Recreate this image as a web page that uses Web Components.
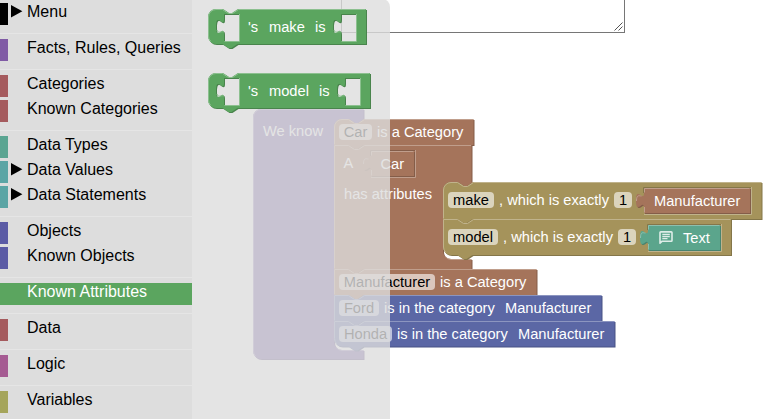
<!DOCTYPE html>
<html lang="en">
<head>
<meta charset="utf-8">
<title>Block editor</title>
<style>
html,body{margin:0;width:770px;height:419px;overflow:hidden;background:#fff;font-family:"Liberation Sans",Arial,sans-serif}
</style>
</head>
<body>
<block-editor></block-editor>
<script>
/* One row of the category list: colour swatch, optional arrow, name. */
customElements.define('toolbox-row', class extends HTMLElement {
  connectedCallback() {
    const c = this.getAttribute('color');
    const on = this.hasAttribute('selected');
    const arrow = this.hasAttribute('closed') ? '<svg width="12" height="13" viewBox="0 0 12 13"><path d="M0 0L11.4 6.3L0 12.6Z"/></svg>' : '';
    this.attachShadow({mode: 'open'}).innerHTML = `<style>
      :host{display:flex;height:22px;margin-bottom:3px;box-sizing:border-box;border-left:8px solid ${c};
        background:${on ? c : 'transparent'};color:${on ? '#fff' : '#000'};font-size:16px;line-height:18px;white-space:nowrap}
      .arrow{width:16px;margin-left:3px;padding-top:2px;line-height:0}
    </style><span class="arrow">${arrow}</span><span><slot></slot></span>`;
  }
});

customElements.define('toolbox-sep', class extends HTMLElement {
  connectedCallback() {
    this.attachShadow({mode: 'open'}).innerHTML =
      '<style>:host{display:block;margin:8px 0 5px;height:1px;background:#e5e5e5}</style>';
  }
});

/* Text on a block; the "field" attribute gives it an editable chip of that width. */
customElements.define('block-label', class extends HTMLElement {
  connectedCallback() {
    const field = this.getAttribute('field');
    this.attachShadow({mode: 'open'}).innerHTML = `<style>
      :host{position:absolute;left:${this.getAttribute('x')}px;top:${this.getAttribute('y')}px;height:16px;
        font-size:14.667px;line-height:16px;white-space:pre;color:${field ? '#000' : '#fff'};
        ${field ? `width:${field}px;text-align:center;border-radius:4px;background:rgba(255,255,255,.6);` : ''}}
    </style><slot></slot>`;
  }
});

const mix = (hex, to, k) => 'rgb(' + [1, 3, 5].map(i =>
  Math.round(parseInt(hex.substr(i, 2), 16) * (1 - k) + to * k)).join() + ')';

/* Block outline with bevel. x, y, w, h are canvas coordinates; holes = x positions of inline sockets;
   rim = colour of the parent block round a nested value. */
customElements.define('code-block', class extends HTMLElement {
  connectedCallback() {
    const n = a => parseFloat(this.getAttribute(a)) || 0;
    const x = n('x'), y = n('y'), w = n('w'), h = n('h'), color = this.getAttribute('color');
    const kind = this.getAttribute('kind');
    let d, hi, rim = '';
    if (kind === 'value') {
      const parent = this.getAttribute('rim');
      d = `M0 0H${w}V${h}H0V20c0 -10 -8 8 -8 -7.5s8 2.5 8 -7.5Z`;
      hi = `M${w - .5} .5H.5V4.5M-7.5 13c0 -7 3 -5 5 -5M.5 19V${h - .5}`;
      rim = `<path d="M-.5 5V-.5H${w + 1}" fill="none" stroke="${mix(parent, 0, .2)}"/>
        <path d="M${w + 1.5} -1V${h + 1.5}H0" fill="none" stroke="${mix(parent, 255, .3)}"/>`;
    } else {
      const top = this.hasAttribute('first') ? 8 : 0;
      const notch = this.hasAttribute('hat') ? '' : 'H15l6 4h3l6 -4';
      const start = top ? `M0 8A8 8 0 0 1 8 0${notch}H${w}` : `M0 0${notch}H${w}`;
      let right = '';
      let inner = '';
      if (this.hasAttribute('mouth')) {
        const [mx, my, mh] = this.getAttribute('mouth').split(' ').map(Number);
        right = `V${my}H${mx + 30}l-6 4h-3l-6 -4h-7a8 8 0 0 0 -8 8v${mh - 16}a8 8 0 0 0 8 8H${w}`;
        inner = `M${mx + 2.3} ${my + mh - 2.3}A8.5 8.5 0 0 0 ${mx + 8} ${my + mh + .5}H${w - .5}`;
      }
      right += `V${h}`;
      const bump = this.hasAttribute('hat') ? '' : 'H29.5l-6 4h-3l-6 -4';
      const round = this.hasAttribute('last');
      d = start + right + bump + (round ? `H8a8 8 0 0 1 -8 -8Z` : `H0Z`);
      hi = (top ? `M.5 ${round ? h - 8 : h - .5}V8A7.5 7.5 0 0 1 8 .5` : `M.5 ${round ? h - 8 : h - .5}V.5`) +
        (notch ? 'H14.5l6 4h4l6 -4' : '') + `H${w - .5}` + inner;
      if (round) hi += `M2.7 ${h - 2.7}A7.5 7.5 0 0 1 .5 ${h - 8}`;
      for (const s of (this.getAttribute('holes') || '').split(' ').filter(Boolean).map(Number)) {
        d += `M${s} 5V10c0 10 -8 -8 -8 7.5s8 -2.5 8 7.5V32H${s + 15}V5Z`;
        hi += `M${s + 15.5} 5V32.5H${s + .5}M${s - 7} 21c1 4 4 1 6.5 2`;
      }
    }
    this.attachShadow({mode: 'open'}).innerHTML = `<style>
      :host{position:absolute;left:${x}px;top:${y}px;width:${w}px;height:${h}px}
      svg{position:absolute;left:0;top:0;overflow:visible}
    </style>
    <svg width="${w}" height="${h}" fill-rule="evenodd">
      ${rim}
      <path d="${d}" transform="translate(1 1)" fill="${mix(color, 0, .2)}"/>
      <path d="${d}" fill="${color}"/>
      <path d="${hi}" fill="none" stroke="${mix(color, 255, .3)}"/>
    </svg><slot></slot>`;
  }
});

/* Speech bubble with three text lines. */
customElements.define('message-icon', class extends HTMLElement {
  connectedCallback() {
    this.attachShadow({mode: 'open'}).innerHTML = `<style>
      :host{position:absolute;left:${this.getAttribute('x')}px;top:${this.getAttribute('y')}px;width:14px;height:14px;opacity:.8}
      svg{display:block}
    </style><svg width="14" height="14" viewBox="0 0 14 14">
      <path d="M1 12.2V1.6Q1 .9 1.8 .9H12.2Q13 .9 13 1.6V9.4Q13 10.2 12.2 10.2H3.2Z" fill="none" stroke="#fff" stroke-width="1.6" stroke-linejoin="round"/>
      <path d="M3.3 3.4H10.8M3.3 5.5H10.8M3.3 7.6H8.5" stroke="#fff" stroke-width="1.3"/>
    </svg>`;
  }
});

customElements.define('block-editor', class extends HTMLElement {
  connectedCallback() {
    const BR = '#a5745b', OC = '#a5935b', BL = '#5b67a5', GR = '#5ba55f';
    this.attachShadow({mode: 'open'}).innerHTML = `<style>
      :host{display:grid;grid-template-columns:192px 1fr;position:relative;width:770px;height:419px;overflow:hidden}
      nav{background:#ddd;padding-top:3px;box-sizing:border-box;height:419px;overflow:hidden;position:relative;z-index:3}
      .code{position:absolute;left:341px;top:-60px;width:282px;height:91px;border:1px solid #767676;background:#fff}
      .code svg{position:absolute;right:1px;bottom:1px}
      .flyout{position:absolute;left:192px;top:-1px;width:198px;height:421px;background:#ddd;opacity:.8;border-top-right-radius:8px;z-index:1}
      .layer{position:absolute;inset:0;z-index:0}
      .layer.top{z-index:2}
    </style>
    <nav>
      <toolbox-row color="#000000" closed>Menu</toolbox-row><toolbox-sep></toolbox-sep>
      <toolbox-row color="#805ba5">Facts, Rules, Queries</toolbox-row><toolbox-sep></toolbox-sep>
      <toolbox-row color="#a55b5e">Categories</toolbox-row>
      <toolbox-row color="#a55b5e">Known Categories</toolbox-row><toolbox-sep></toolbox-sep>
      <toolbox-row color="#5ba592">Data Types</toolbox-row>
      <toolbox-row color="#5ba5a5" closed>Data Values</toolbox-row>
      <toolbox-row color="#5ba5a5" closed>Data Statements</toolbox-row><toolbox-sep></toolbox-sep>
      <toolbox-row color="#5b5ba5">Objects</toolbox-row>
      <toolbox-row color="#5b5ba5">Known Objects</toolbox-row><toolbox-sep></toolbox-sep>
      <toolbox-row color="${GR}" selected>Known Attributes</toolbox-row><toolbox-sep></toolbox-sep>
      <toolbox-row color="#a55b5e">Data</toolbox-row><toolbox-sep></toolbox-sep>
      <toolbox-row color="#a55b92">Logic</toolbox-row><toolbox-sep></toolbox-sep>
      <toolbox-row color="#a5a55b">Variables</toolbox-row>
    </nav>
    <div class="layer">
      <div class="code"><svg width="9" height="9" viewBox="0 0 9 9"><path d="M.5 8.5L8.5 .5M4.5 8.5L8.5 4.5" stroke="#555" stroke-width="1"/></svg></div>
      <code-block x="253" y="109" w="110.5" h="250" color="#745ba5" hat first last mouth="81 10 231">
        <block-label x="10" y="14">We know</block-label>
      </code-block>
      <code-block x="334" y="119" w="139.5" h="26" color="${BR}" first>
        <block-label x="5" y="5" field="33">Car</block-label>
        <block-label x="43" y="5">is a Category</block-label>
      </code-block>
      <code-block x="334" y="145" w="137.5" h="124" color="${BR}" mouth="109 37 77">
        <block-label x="9.5" y="10">A</block-label>
        <block-label x="10" y="41">has attributes</block-label>
      </code-block>
      <code-block x="371" y="151" w="43" h="25" color="${BR}" rim="${BR}" kind="value">
        <block-label x="9.5" y="5">Car</block-label>
      </code-block>
      <code-block x="334" y="269" w="202.5" h="26" color="${BR}">
        <block-label x="5" y="5" field="96">Manufacturer</block-label>
        <block-label x="106" y="5">is a Category</block-label>
      </code-block>
      <code-block x="334" y="295" w="267.5" h="26" color="${BL}">
        <block-label x="5" y="5" field="40">Ford</block-label>
        <block-label x="50" y="5">is in the category</block-label>
        <block-label x="171" y="5">Manufacturer</block-label>
      </code-block>
      <code-block x="334" y="321" w="280.5" h="25.5" color="${BL}" last>
        <block-label x="5" y="5" field="53">Honda</block-label>
        <block-label x="63" y="5">is in the category</block-label>
        <block-label x="184" y="5">Manufacturer</block-label>
      </code-block>
      <code-block x="443" y="182" w="318.5" h="37" color="${OC}" first>
        <block-label x="5" y="10" field="46">make</block-label>
        <block-label x="56" y="10">, which is exactly</block-label>
        <block-label x="171" y="10" field="18">1</block-label>
      </code-block>
      <code-block x="443" y="219" w="288" h="36" color="${OC}" last>
        <block-label x="5" y="10" field="50">model</block-label>
        <block-label x="60" y="10">, which is exactly</block-label>
        <block-label x="175" y="10" field="18">1</block-label>
      </code-block>
      <code-block x="644" y="188" w="106" h="25" color="${BR}" rim="${OC}" kind="value">
        <block-label x="10" y="5">Manufacturer</block-label>
      </code-block>
      <code-block x="648" y="225" w="72" h="25" color="#5ba58c" rim="${OC}" kind="value">
        <message-icon x="10.5" y="6"></message-icon>
        <block-label x="35" y="5">Text</block-label>
      </code-block>
    </div>
    <div class="flyout"></div>
    <div class="layer top">
      <code-block x="208" y="9" w="158" h="35" color="${GR}" first last holes="16 133">
        <block-label x="40" y="10">'s</block-label>
        <block-label x="61" y="10">make</block-label>
        <block-label x="107" y="10">is</block-label>
      </code-block>
      <code-block x="208" y="73" w="162" h="35" color="${GR}" first last holes="16 137">
        <block-label x="40" y="10">'s</block-label>
        <block-label x="61" y="10">model</block-label>
        <block-label x="111" y="10">is</block-label>
      </code-block>
    </div>`;
  }
});
</script>
</body>
</html>
